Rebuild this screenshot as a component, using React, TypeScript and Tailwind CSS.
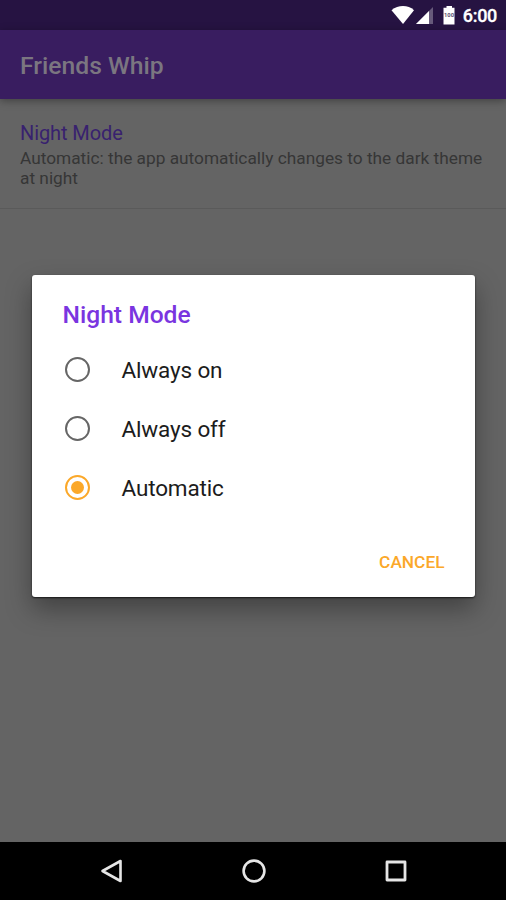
import React, { useState } from 'react';

const options = ['Always on', 'Always off', 'Automatic'];

function StatusBar() {
  return (
    <div className="flex h-[30px] items-center justify-end bg-[#261342] pr-[9px] text-white">
      <svg className="h-[30px] w-[72px]" viewBox="0 0 72 30" fill="#ffffff">
        {/* Wifi */}
        <path d="M0.5 10.2C4 7.5 8 6.1 12 6.1s8 1.4 11 4.1L12 24 0.5 10.2z" />
        {/* Signal strength */}
        <path d="M42 7v17H25L42 7z" fillOpacity="0.3" />
        <path d="M38 11v13H25L38 11z" />
        {/* Battery */}
        <path d="M55.5 6h5.5v1.8h2.5V24.5h-11V7.8h3V6z" />
        <text x="58" y="17.3" textAnchor="middle" fontSize="5.8" fontWeight="700" fill="#5c5170">100</text>
      </svg>
      <span className="pt-[2px] text-[18px] font-medium leading-[28px] tracking-[-0.3px] [-webkit-text-stroke:0.3px_#ffffff]">6:00</span>
    </div>
  );
}

function NavigationBar() {
  return (
    <div className="flex h-[58px] items-center justify-center gap-[118px] bg-black pl-[2px]">
      <svg className="h-6 w-6" viewBox="0 0 24 24" fill="none" stroke="#e6e6e6" strokeWidth="2.6" strokeLinejoin="round">
        <path d="M20.5 2v20L2.5 12z" />
      </svg>
      <svg className="h-6 w-6" viewBox="0 0 24 24" fill="none" stroke="#e6e6e6" strokeWidth="2.6">
        <circle cx="12" cy="12" r="10.4" />
      </svg>
      <svg className="h-6 w-6" viewBox="0 0 24 24" fill="none" stroke="#e6e6e6" strokeWidth="2.8" strokeLinejoin="round">
        <path d="M3 3h18v18H3z" />
      </svg>
    </div>
  );
}

export default function App() {
  const [mode, setMode] = useState('Automatic');
  const [open, setOpen] = useState(true);

  return (
    <div className="relative flex h-[900px] w-[506px] flex-col overflow-hidden bg-[#646464] font-[Roboto,sans-serif]">
      <StatusBar />

      <header className="z-10 flex h-[69px] items-center bg-[#391d60] px-5 pt-[3px] shadow-[0_2px_8px_rgba(0,0,0,0.35)]">
        <h1 className="text-[24.7px] font-medium text-[#7b7680]">Friends Whip</h1>
      </header>

      <main className="flex-1">
        <div className="h-[110px] border-b border-[#5a5a5a] px-5 pt-[22px]">
          <div className="text-[20px] leading-6 tracking-[-0.1px] text-[#38216f]">Night Mode</div>
          <div className="mt-[3px] text-[17.3px] leading-5 text-[#363636]">
            Automatic: the app automatically changes to the dark theme at night
          </div>
        </div>
      </main>

      <NavigationBar />

      {open && (
        <div className="absolute inset-x-0 top-[275px] z-20 flex justify-center">
          <div className="flex h-[322px] w-[443px] flex-col rounded-[3px] bg-white shadow-[0_1px_2px_rgba(0,0,0,0.7),0_12px_26px_rgba(0,0,0,0.35)]" role="dialog">
            <h2 className="px-[31px] pt-[25px] text-[24.6px] font-medium leading-[30px] text-[#7a35e0]">Night Mode</h2>
            <div className="mt-[11px]">
              {options.map((option) => (
                <button
                  key={option}
                  type="button"
                  className="flex h-[59px] w-full items-center pl-[33px] text-left"
                  onClick={() => setMode(option)}
                >
                  {mode === option ? (
                    <span className="mb-[2px] flex h-[25px] w-[25px] items-center justify-center rounded-full border-2 border-[#fba829]">
                      <span className="h-[13px] w-[13px] rounded-full bg-[#fba829]" />
                    </span>
                  ) : (
                    <span className="mb-[2px] h-[25px] w-[25px] rounded-full border-2 border-[#666666]" />
                  )}
                  <span className="ml-[32px] text-[22.5px] tracking-[-0.15px] text-[#1c1c1c]">{option}</span>
                </button>
              ))}
            </div>
            <div className="mt-auto flex justify-end pb-[24px] pr-[30px]">
              <button type="button" className="text-[17.3px] font-medium leading-[22px] text-[#fba829]" onClick={() => setOpen(false)}>
                CANCEL
              </button>
            </div>
          </div>
        </div>
      )}
    </div>
  );
}
